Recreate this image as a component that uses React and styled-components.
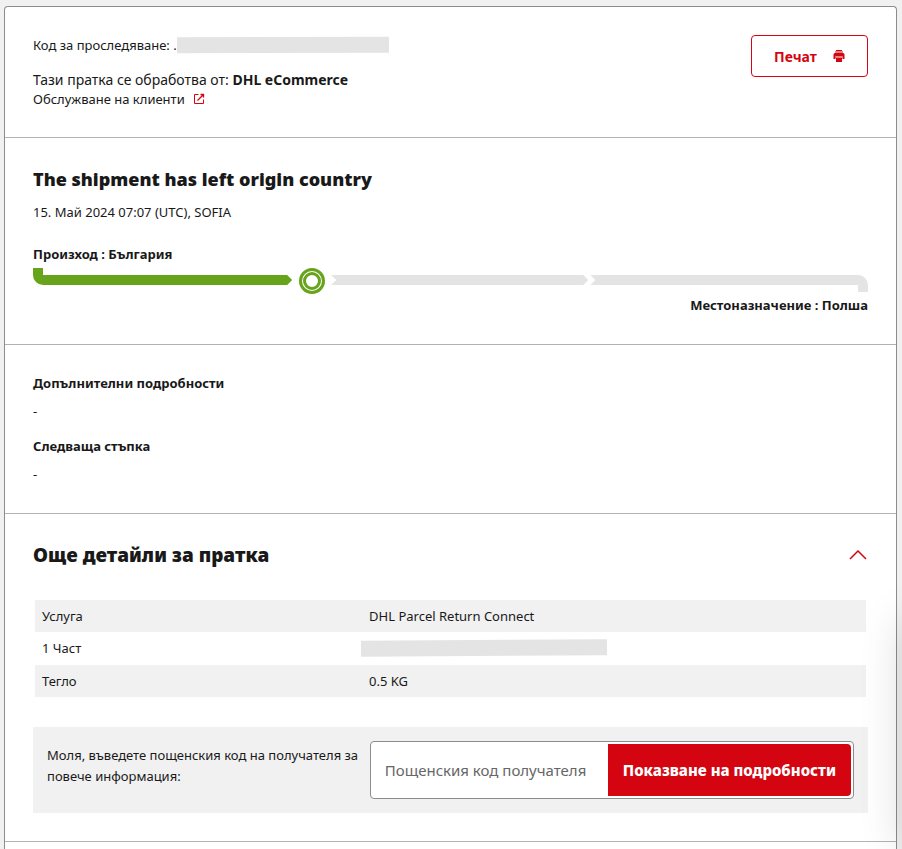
import styled, { createGlobalStyle } from 'styled-components';
import { useState } from "react"

function App() {

  const [open, setOpen] = useState(true)
  const [postcode, setPostcode] = useState("")

  let details =
    [
      { label: "Услуга", value: "DHL Parcel Return Connect" },
      { label: "1 Част", hidden: true },
      { label: "Тегло", value: "0.5 KG" },
    ]

  return (
    <Page lang="bg">
      <GlobalStyle />
      <Card>
        <Header>
          <div>
            <Tracking>
              Код за проследяване: .<Redacted $width={212} $tilt={-0.2} />
            </Tracking>
            <Handler>Тази пратка се обработва от: <b>DHL eCommerce</b></Handler>
            <ServiceLink href="#service">
              Обслужване на клиенти
              <ExternalIcon />
            </ServiceLink>
          </div>
          <PrintButton type="button" onClick={ () => window.print() }>
            Печат
            <PrintIcon />
          </PrintButton>
        </Header>

        <Status>
          <Title $size={18}>The shipment has left origin country</Title>
          <StatusDate>15. Май 2024 07:07 (UTC), SOFIA</StatusDate>
          <PlaceLabel>Произход : България</PlaceLabel>
          <Track>
            <FirstLeg />
            <Marker />
            <MiddleLeg />
            <LastLeg />
          </Track>
          <PlaceLabel $end>Местоназначение : Полша</PlaceLabel>
        </Status>

        <Notes>
          <NoteTitle>Допълнителни подробности</NoteTitle>
          <NoteText>-</NoteText>
          <NoteTitle>Следваща стъпка</NoteTitle>
          <NoteText>-</NoteText>
        </Notes>

        <Section>
          <MoreHeader>
            <Title $size={19}>Още детайли за пратка</Title>
            <ToggleButton type="button" aria-label="Още детайли" aria-expanded={open} onClick={ () => setOpen(!open) }>
              <ChevronIcon $open={open} />
            </ToggleButton>
          </MoreHeader>
          {
            open &&
            <>
              <Table>
                <tbody>
                  {
                    details.map((row, i) =>
                      <Row key={i}>
                        <HeadCell scope="row">{row.label}</HeadCell>
                        <Cell>{row.hidden ? <Redacted $width={246} $tilt={-0.4} $outset /> : row.value}</Cell>
                      </Row>
                    )
                  }
                </tbody>
              </Table>
              <PostcodeForm onSubmit={ (e) => e.preventDefault() }>
                <FormLabel htmlFor="postcode">
                  Моля, въведете пощенския код на получателя за повече информация:
                </FormLabel>
                <InputGroup>
                  <Input
                    id="postcode"
                    placeholder="Пощенския код получателя"
                    value={postcode}
                    onChange={ (e) => setPostcode(e.target.value) }
                  />
                  <SubmitButton type="submit">Показване на подробности</SubmitButton>
                </InputGroup>
              </PostcodeForm>
            </>
          }
        </Section>
      </Card>
      <SideDrawer />
    </Page>
  );
}

const ExternalIcon = () => (
  <svg width="12" height="12" viewBox="0 0 12 12" fill="none" stroke="#d40511" aria-hidden="true">
    <path d="M5.5 1.5H1.5V10.5H10.5V6.5" />
    <path d="M7.5 1.5H10.5V4.5M10.5 1.5L4.5 7.5" strokeWidth="1.3" />
  </svg>
)

const PrintIcon = () => (
  <svg width="12" height="12" viewBox="0 0 12 12" fill="#d40511" aria-hidden="true">
    <path d="M3 0H9V1H3Z" />
    <path d="M2 3H10Q11.500 3 11.500 4.500V9H9.500V6H2.500V9H.500V4.500Q.500 3 2 3Z" />
    <path d="M3 8H9V12H3Z" />
    <path d="M2 1H10V3H2ZM2.500 6H9.500V8H2.500Z" opacity=".5" />
  </svg>
)

const ChevronIcon = ({ $open }) => (
  <svg width="18" height="10" viewBox="0 0 18 10" fill="none" stroke="#d40511" strokeWidth="1.500" aria-hidden="true">
    <path d={$open ? "M1 9L9 1L17 9" : "M1 1L9 9L17 1"} />
  </svg>
)

const GlobalStyle = createGlobalStyle`
  *, *::before {
    box-sizing: border-box;
  }
  body {
    margin: 0;
    background-color: #f1f1f1;
    color: #191919;
    font-family: "Noto Sans", sans-serif;
    font-size: 13px;
    line-height: 20px;
  }
  button, input {
    font-family: inherit;
  }
`

const Page = styled.main`
  min-height: 100vh;
  padding: 6px 5px 0 4px;
  display: flex;
  overflow: hidden;
`

const Card = styled.div`
  flex: 1;
  min-width: 0;
  background-color: white;
  border: 1px solid #8c8c8c;
  border-bottom: none;
  border-radius: 4px 4px 0 0;
`

const Section = styled.section`
  padding: 28px;
  border-bottom: 1px solid #b2b2b2;
`

const Header = styled(Section)`
  display: flex;
  justify-content: space-between;
  align-items: flex-start;
`

const Tracking = styled.div`
  display: flex;
  align-items: center;
  margin-bottom: 16px;
  white-space: pre;
`

const Redacted = styled.span`
  display: block;
  width: ${props => props.$width}px;
  height: 16px;
  margin-left: ${props => props.$outset ? "-8px" : "0"};
  background-color: #e4e4e4;
  transform: rotate(${props => props.$tilt}deg);
`

const Handler = styled.div`
  font-size: 14px;
  line-height: 18px;
`

const ServiceLink = styled.a`
  display: flex;
  align-items: center;
  gap: 8px;
  color: inherit;
  text-decoration: none;
`

const PrintButton = styled.button`
  display: flex;
  align-items: center;
  justify-content: space-between;
  width: 117px;
  height: 42px;
  padding: 0 22px;
  background-color: white;
  border: 1px solid #d40511;
  border-radius: 4px;
  color: #d40511;
  font-size: 14px;
  font-weight: bold;
  cursor: pointer;
`

const Status = styled(Section)`
  padding-bottom: 29px;
`

const Title = styled.h2`
  margin: 0;
  font-size: ${props => props.$size}px;
  font-weight: 900;
  line-height: 26px;
`

const StatusDate = styled.p`
  margin: 10px 0 22px 0;
`

const PlaceLabel = styled.div`
  font-weight: bold;
  text-align: ${props => props.$end ? "right" : "left"};
`

const Track = styled.div`
  display: grid;
  grid-template-columns: 14fr 39px 14fr 15fr;
  height: 26px;
  margin: 4px 0 1px 0;
`

const FirstLeg = styled.div`
  height: 17px;
  background-color: #67a31b;
  border-bottom-left-radius: 10px;
  clip-path: polygon(0 0, 10px 0, 10px 7px, calc(100% - 5px) 7px, 100% 12px, calc(100% - 5px) 100%, 0 100%);
`

// Two green rings with a thin white gap between them
const Marker = styled.div`
  width: 26px;
  height: 26px;
  margin-left: 7px;
  padding: 1px;
  border: 3px solid #67a31b;
  border-radius: 50%;

  &::before {
    content: "";
    display: block;
    height: 100%;
    border: 3px solid #67a31b;
    border-radius: 50%;
  }
`

const MiddleLeg = styled.div`
  height: 10px;
  margin: 7px 2px 0 0;
  background-color: #e4e4e4;
  clip-path: polygon(0 0, calc(100% - 5px) 0, 100% 50%, calc(100% - 5px) 100%, 0 100%, 5px 50%);
`

const LastLeg = styled.div`
  height: 17px;
  margin-top: 7px;
  background-color: #e4e4e4;
  border-top-right-radius: 10px;
  clip-path: polygon(0 0, 100% 0, 100% 100%, calc(100% - 10px) 100%, calc(100% - 10px) 10px, 0 10px, 5px 5px);
`

const Notes = styled(Section)`
  padding-bottom: 14px;
`

const NoteTitle = styled.h3`
  margin: 0 0 8px 0;
  font-size: 13px;
`

const NoteText = styled.p`
  margin: 0 0 15px 0;
`

const MoreHeader = styled.div`
  display: flex;
  align-items: center;
  justify-content: space-between;
  margin-bottom: 32px;
`

const ToggleButton = styled.button`
  display: flex;
  padding: 0;
  margin-right: 1px;
  background: none;
  border: none;
  cursor: pointer;
`

const Table = styled.table`
  width: calc(100% - 4px);
  height: 97px;
  margin: 0 2px 30px 2px;
  border-collapse: collapse;
  table-layout: fixed;
`

const Row = styled.tr`
  height: 32px;

  &:nth-child(odd) {
    background-color: #f1f1f1;
  }
`

const HeadCell = styled.th`
  width: 39%;
  padding: 0 7px;
  font-weight: normal;
  text-align: left;
`

const Cell = styled.td`
  padding: 0 10px;
`

const PostcodeForm = styled.form`
  display: flex;
  gap: 4px;
  padding: 14px;
  background-color: #f1f1f1;
`

const FormLabel = styled.label`
  flex: 2;
  padding-top: 4px;
  line-height: 21px;
`

const InputGroup = styled.div`
  flex: 3;
  display: flex;
  min-width: 0;
  height: 58px;
  padding: 2px;
  background-color: white;
  border: 1px solid #8c8c8c;
  border-radius: 4px;
`

const Input = styled.input`
  flex: 1;
  min-width: 0;
  padding: 0 12px;
  border: none;
  outline: none;
  font-size: 15px;

  &::placeholder {
    color: #666666;
  }
`

const SubmitButton = styled.button`
  padding: 0 15px;
  background-color: #d40511;
  border: none;
  border-radius: 0 4px 4px 0;
  color: white;
  font-size: 15px;
  font-weight: 800;
  cursor: pointer;
`

// Parked just outside the window, only its shadow reaches in
const SideDrawer = styled.aside`
  position: fixed;
  left: 100%;
  top: 620px;
  bottom: 0;
  width: 300px;
  box-shadow: 0 0 40px rgba(0, 0, 0, 0.15);
`

export default App;
